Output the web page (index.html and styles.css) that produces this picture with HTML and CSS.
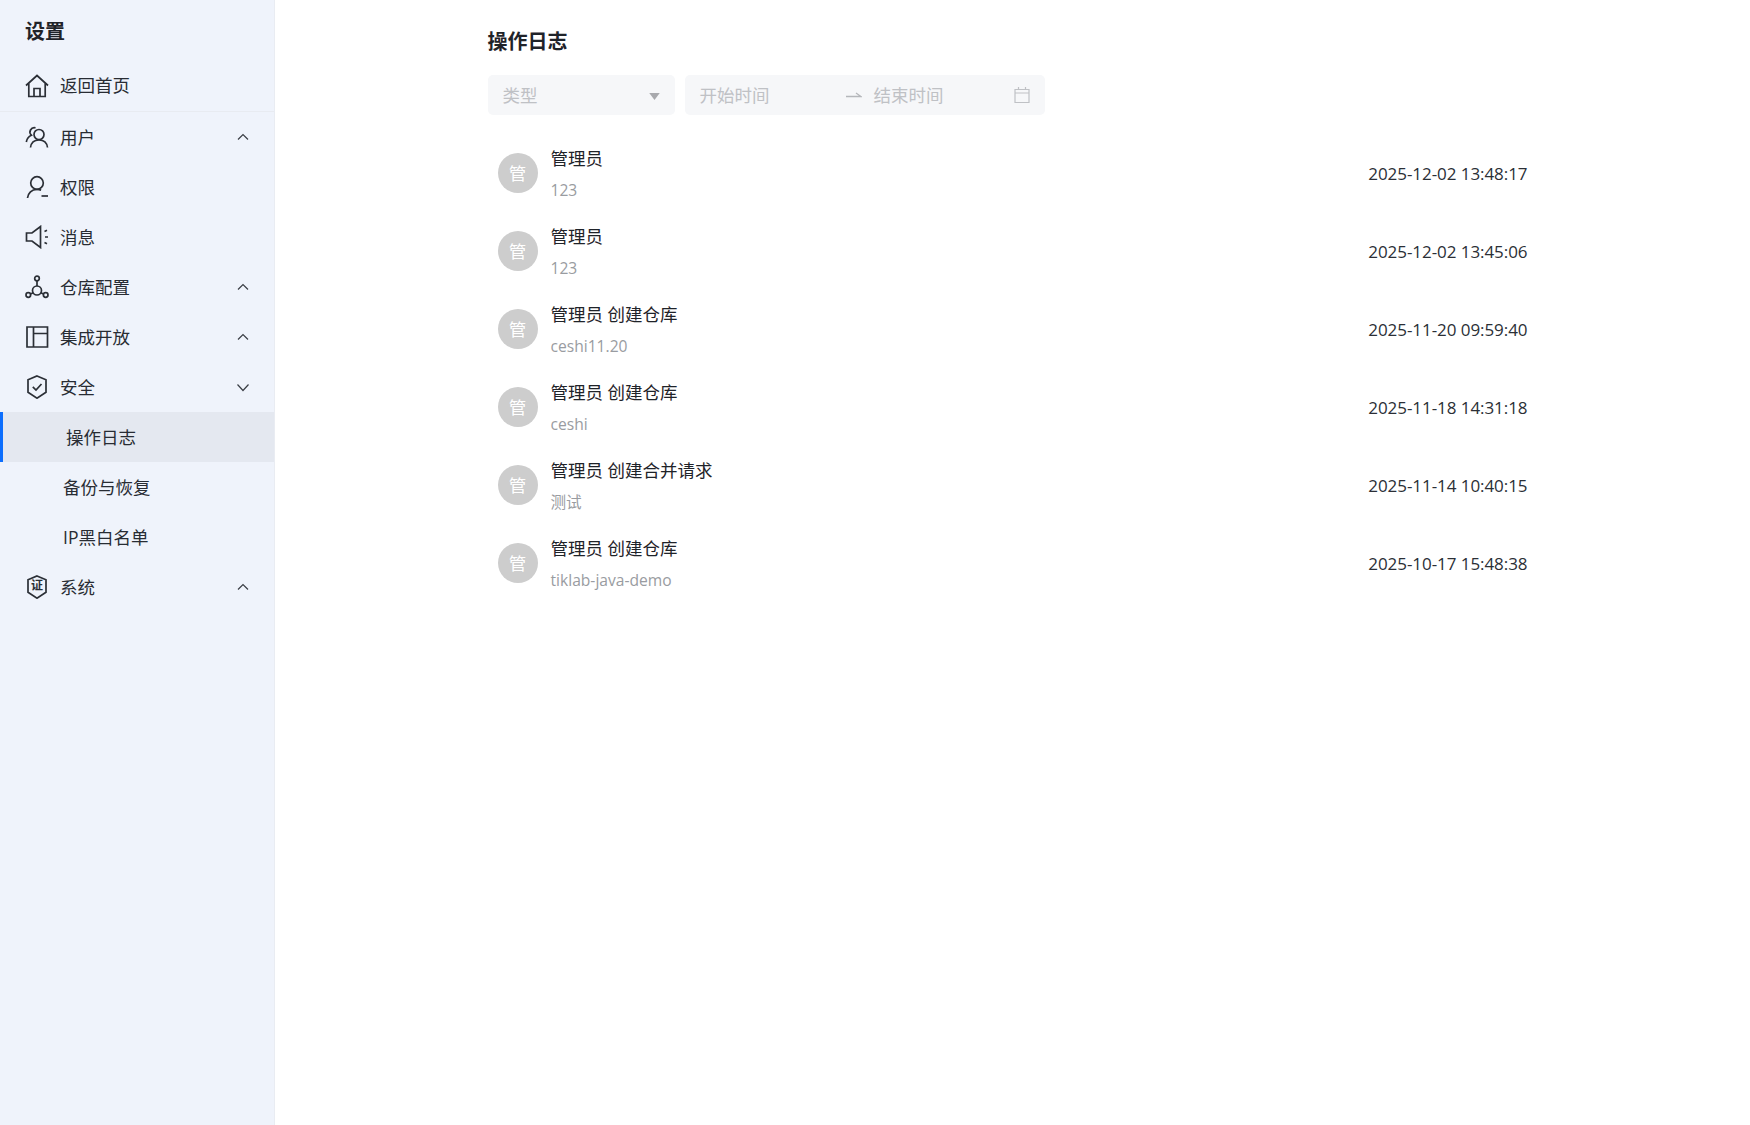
FILE: index.html
```html
<!DOCTYPE html>
<html lang="zh-CN">
<head>
    <meta charset="UTF-8">
    <title>操作日志</title>
    <link rel="stylesheet" href="styles.css">
</head>
<body>
    <div class="layout">
        <aside class="sidebar">
            <div class="side-title">设置</div>
            <a class="menu-item home">
                <svg class="menu-icon" viewBox="0 0 24 24"><path d="M1 11.500 12 1.500l11 10"/><path d="M3.800 9.500V22.500h16.400V9.500"/><path d="M9 22.500v-8h6v8"/></svg>
                <span class="label">返回首页</span>
            </a>
            <a class="menu-item">
                <svg class="menu-icon" viewBox="0 0 24 24"><circle cx="14" cy="9.500" r="5"/><path d="M5.500 22.500c.6-4.800 4-7.500 8.500-7.500s7.900 2.700 8.500 7.500"/><path d="M10.500 2.800A4.500 4.500 0 0 0 5.500 5c-1 1.800-.6 3.800.9 5.200C3.500 11.500 1.800 13.800 1.300 17"/></svg>
                <span class="label">用户</span>
                <svg class="arrow" viewBox="0 0 12 12"><path d="M1 8.500 6 3.500l5 5"/></svg>
            </a>
            <a class="menu-item">
                <svg class="menu-icon" viewBox="0 0 24 24"><circle cx="12" cy="8" r="6.300"/><path d="M2.500 23c.5-5 4.200-8.700 9.500-8.700 1.500 0 2.900.3 4.100.8"/><path d="M16.500 21h6.500"/></svg>
                <span class="label">权限</span>
            </a>
            <a class="menu-item">
                <svg class="menu-icon" viewBox="0 0 24 24"><path d="M15.500 1.500v21L7 16H1.500V8H7z"/><path d="M19.500 6.500l2.500-1.200M20 12h3M19.500 17.500l2.500 1.200"/></svg>
                <span class="label">消息</span>
            </a>
            <a class="menu-item">
                <svg class="menu-icon" viewBox="0 0 24 24"><circle cx="12" cy="3.500" r="2.300"/><circle cx="3.300" cy="20" r="2.300"/><circle cx="20.700" cy="20" r="2.300"/><circle cx="12" cy="15.500" r="4.500"/><path d="M12 5.800v5.200M5.500 19l2.700-1.300M18.500 19l-2.700-1.300"/></svg>
                <span class="label">仓库配置</span>
                <svg class="arrow" viewBox="0 0 12 12"><path d="M1 8.500 6 3.500l5 5"/></svg>
            </a>
            <a class="menu-item">
                <svg class="menu-icon" viewBox="0 0 24 24"><path d="M2 2h20.500v20H2z"/><path d="M8.500 2v20M8.500 8.500h14"/></svg>
                <span class="label">集成开放</span>
                <svg class="arrow" viewBox="0 0 12 12"><path d="M1 8.500 6 3.500l5 5"/></svg>
            </a>
            <a class="menu-item">
                <svg class="menu-icon" viewBox="0 0 24 24"><path d="M12 1 21 4.800v12.400l-9 6-9-6V4.800z"/><path d="m7.800 11.800 3.200 3.200 5.500-6"/></svg>
                <span class="label">安全</span>
                <svg class="arrow" viewBox="0 0 12 12"><path d="M.5 3.500 6 9.500l5.500-6"/></svg>
            </a>
            <a class="menu-item sub active"><span class="label">操作日志</span></a>
            <a class="menu-item sub"><span class="label">备份与恢复</span></a>
            <a class="menu-item sub"><span class="label">IP黑白名单</span></a>
            <a class="menu-item">
                <span class="shield-icon">
                    <svg class="menu-icon" viewBox="0 0 24 24"><path d="M12 1 21 4.800v12.400l-9 6-9-6V4.800z"/></svg>
                    <b>证</b>
                </span>
                <span class="label">系统</span>
                <svg class="arrow" viewBox="0 0 12 12"><path d="M1 8.500 6 3.500l5 5"/></svg>
            </a>
        </aside>
        <main class="content">
            <div class="container">
                <h1>操作日志</h1>
                <div class="filters">
                    <div class="select">
                        <span class="label">类型</span>
                        <svg class="caret" viewBox="0 0 12 8"><path d="M0 0h12L6 8z"/></svg>
                    </div>
                    <div class="range">
                        <span class="label range-start">开始时间</span>
                        <svg class="range-arrow" viewBox="0 0 16 8"><path d="M0 5.500h15L10 2"/></svg>
                        <span class="label">结束时间</span>
                        <svg class="calendar" viewBox="0 0 16 16"><path d="M1 2.500h14v13H1zM1 6h14M4.500 0v2.500M11.500 0v2.500"/></svg>
                    </div>
                </div>
                <ul class="log-list">
                    <li class="log-row">
                        <div class="avatar">管</div>
                        <div class="log-main"><div class="log-name">管理员</div><div class="log-sub">123</div></div>
                        <div class="log-time">2025-12-02 13:48:17</div>
                    </li>
                    <li class="log-row">
                        <div class="avatar">管</div>
                        <div class="log-main"><div class="log-name">管理员</div><div class="log-sub">123</div></div>
                        <div class="log-time">2025-12-02 13:45:06</div>
                    </li>
                    <li class="log-row">
                        <div class="avatar">管</div>
                        <div class="log-main"><div class="log-name">管理员 创建仓库</div><div class="log-sub">ceshi11.20</div></div>
                        <div class="log-time">2025-11-20 09:59:40</div>
                    </li>
                    <li class="log-row">
                        <div class="avatar">管</div>
                        <div class="log-main"><div class="log-name">管理员 创建仓库</div><div class="log-sub">ceshi</div></div>
                        <div class="log-time">2025-11-18 14:31:18</div>
                    </li>
                    <li class="log-row">
                        <div class="avatar">管</div>
                        <div class="log-main"><div class="log-name">管理员 创建合并请求</div><div class="log-sub">测试</div></div>
                        <div class="log-time">2025-11-14 10:40:15</div>
                    </li>
                    <li class="log-row">
                        <div class="avatar">管</div>
                        <div class="log-main"><div class="log-name">管理员 创建仓库</div><div class="log-sub">tiklab-java-demo</div></div>
                        <div class="log-time">2025-10-17 15:48:38</div>
                    </li>
                </ul>
            </div>
        </main>
    </div>
</body>
</html>
```

FILE: styles.css
```css
* {
    box-sizing: border-box;
}
html, body {
    height: 100%;
}
body {
    margin: 0;
    font-family: "Open Sans", "Noto Sans CJK SC", sans-serif;
    font-size: 17.5px;
    color: #1f2329;
    background-color: #fff;
    overflow: hidden;
}
.layout {
    display: flex;
    height: 100vh;
}
.sidebar {
    width: 275px;
    flex: none;
    background-color: #eff3fb;
    border-right: 1px solid #e9ecf2;
}
.side-title {
    height: 60px;
    padding: 13px 25px 0;
    font-size: 20px;
    line-height: 38px;
    font-weight: 700;
}
.menu-item {
    display: flex;
    align-items: center;
    height: 50px;
    padding: 0 25px;
    color: #282c33;
}
.label {
    margin-top: -2px;
}
.menu-item.home {
    height: 52px;
    border-bottom: 1px solid #e8ebf1;
}
.menu-icon {
    width: 24px;
    height: 24px;
    margin-right: 11px;
    flex: none;
    fill: none;
    stroke: #2b2f36;
    stroke-width: 1.700;
}
.arrow {
    width: 12px;
    height: 12px;
    margin-left: auto;
    fill: none;
    stroke: #3a3e45;
    stroke-width: 1.200;
}
.menu-item.sub {
    padding-left: 63px;
}
.menu-item.active {
    padding-left: 63px;
    background-color: #e4e8f0;
    border-left: 3px solid #0d6efd;
}
.shield-icon {
    position: relative;
    display: flex;
}
.shield-icon b {
    position: absolute;
    left: 6px;
    top: 4px;
    width: 12px;
    font-size: 12px;
    line-height: 14px;
    text-align: center;
    font-weight: 700;
    color: #2b2f36;
}
.content {
    flex: 1;
    min-width: 0;
}
.container {
    width: 1050px;
    margin: 0 auto;
}
h1 {
    margin: 0;
    padding-top: 23px;
    font-size: 20px;
    line-height: 38px;
    font-weight: 700;
}
.filters {
    display: flex;
    gap: 10px;
    margin-top: 14px;
}
.select, .range {
    display: flex;
    align-items: center;
    height: 40px;
    padding: 0 15px;
    background-color: #f6f7f9;
    border-radius: 5px;
    color: #bfc1c5;
}
.select {
    width: 187px;
    justify-content: space-between;
}
.caret {
    width: 11px;
    height: 7px;
    fill: #a8a9ad;
    margin-top: 3px;
}
.range {
    width: 360px;
}
.range-start {
    width: 146px;
}
.range-arrow {
    width: 16px;
    height: 8px;
    margin-right: 12px;
    fill: none;
    stroke: #b5b7bb;
    stroke-width: 1.300;
}
.calendar {
    width: 16px;
    height: 16px;
    margin-left: auto;
    fill: none;
    stroke: #bfc1c5;
    stroke-width: 1.200;
}
.log-list {
    list-style: none;
    margin: 19px 0 0;
    padding: 0;
}
.log-row {
    display: flex;
    align-items: center;
    height: 78px;
    padding: 0 10px;
}
.avatar {
    width: 40px;
    height: 40px;
    flex: none;
    border-radius: 50%;
    background-color: #cdcdcd;
    color: #fff;
    text-align: center;
    line-height: 40px;
    font-size: 17.500px;
}
.log-main {
    margin-left: 13px;
    flex: 1;
    min-width: 0;
}
.log-name {
    line-height: 26px;
    color: #1f2329;
}
.log-sub {
    margin-top: 7px;
    margin-bottom: -1px;
    line-height: 24px;
    font-size: 15.625px;
    color: #999ca1;
}
.log-time {
    font-size: 17px;
    letter-spacing: -.06px;
    color: #2b2f36;
}
```
